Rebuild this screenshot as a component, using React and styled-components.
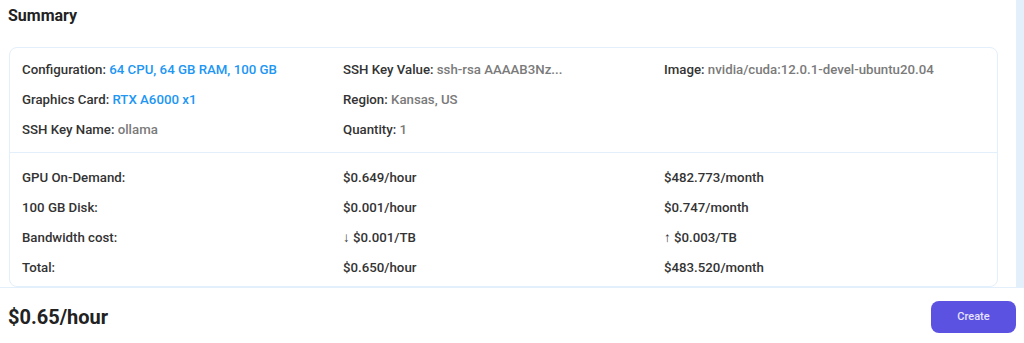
import styled, { createGlobalStyle } from "styled-components";

const GlobalStyle = createGlobalStyle`
    body {
        margin: 0;
        background: #fff;
        font-family: Roboto, "Liberation Sans", sans-serif;
        color: #333;
    }
`

const Page = styled.div`
    width: 1024px;
    height: 343px;
    display: flex;
    flex-direction: column;
    overflow: hidden;
`

const ScrollArea = styled.div`
    height: 288px;
    display: flex;
    border-bottom: 1px solid #e3effb;
    box-sizing: border-box;
`

const Content = styled.div`
    flex: 1;
    padding: 0 18px 0 9px;
    overflow: hidden;
`

const Track = styled.div`
    width: 8px;
    background: #e3effb;
`

const Title = styled.h2`
    font-size: 16px;
    font-weight: 700;
    color: #222;
    margin: 0;
    padding: 6px 0 0 0;
    margin-left: -1px;
    line-height: 20px;
    height: 41px;
`

const Card = styled.div`
    border: 1px solid #e3effb;
    border-radius: 8px;
    height: 240px;
    box-sizing: border-box;
`

const Section = styled.div`
    display: grid;
    grid-template-columns: repeat(3, 1fr);
    row-gap: 10px;
    padding: ${props => props.$divider ? "15px 12px 10px" : "12px"};
    border-top: ${props => props.$divider ? "1px solid #e3effb" : "none"};
`

const Cell = styled.div`
    font-size: 13.25px;
    line-height: 20px;
    font-weight: 500;
    color: #333;
    white-space: nowrap;
`

const Value = styled.span`
    color: ${props => props.$blue ? "#2196f3" : "#7a7a7a"};
`

const Arrow = styled.span`
    font-family: "Liberation Sans", sans-serif;
    font-weight: 400;
    color: #333;
`

const Footer = styled.div`
    flex: 1;
    display: flex;
    align-items: center;
    justify-content: space-between;
    padding: 0 8px 0 8px;
`

const Price = styled.div`
    font-size: 20px;
    font-weight: 700;
    color: #222;
    margin-top: 2px;
`

const Button = styled.button`
    width: 85px;
    height: 32px;
    border: none;
    border-radius: 8px;
    background: #5b52e1;
    color: #e6e3ff;
    font-family: Roboto, "Liberation Sans", sans-serif;
    font-size: 11px;
    font-weight: 500;
    margin-top: 2px;
`

const info = [
    [["Configuration:", "64 CPU, 64 GB RAM, 100 GB", true], ["SSH Key Value:", "ssh-rsa AAAAB3Nz..."], ["Image:", "nvidia/cuda:12.0.1-devel-ubuntu20.04"]],
    [["Graphics Card:", "RTX A6000 x1", true], ["Region:", "Kansas, US"], null],
    [["SSH Key Name:", "ollama"], ["Quantity:", "1"], null],
]

const costs = [
    ["GPU On-Demand:", "$0.649/hour", "$482.773/month"],
    ["100 GB Disk:", "$0.001/hour", "$0.747/month"],
    ["Bandwidth cost:", ["↓", "$0.001/TB"], ["↑", "$0.003/TB"]],
    ["Total:", "$0.650/hour", "$483.520/month"],
]

const App = () => {
    return (
        <>
            <GlobalStyle />
            <Page>
                <ScrollArea>
                    <Content>
                        <Title>Summary</Title>
                        <Card>
                            <Section>
                                {info.flat().map((item, i) => (
                                    <Cell key={i}>
                                        {item && (
                                            <>
                                                {item[0]} <Value $blue={item[2]}>{item[1]}</Value>
                                            </>
                                        )}
                                    </Cell>
                                ))}
                            </Section>
                            <Section $divider>
                                {costs.flat().map((text, i) => (
                                    <Cell key={i}>
                                        {Array.isArray(text) ? (
                                            <>
                                                <Arrow>{text[0]}</Arrow> {text[1]}
                                            </>
                                        ) : text}
                                    </Cell>
                                ))}
                            </Section>
                        </Card>
                    </Content>
                    <Track />
                </ScrollArea>
                <Footer>
                    <Price>$0.65/hour</Price>
                    <Button>Create</Button>
                </Footer>
            </Page>
        </>
    )
}

export default App;
